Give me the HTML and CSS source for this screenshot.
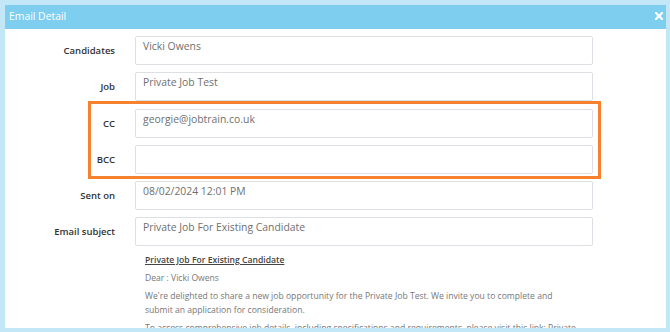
FILE: index.html
```html
<!doctype html>
<html lang = "en">
    <head>
        <meta charset = "utf-8" />
        <meta name = "viewport" content = "width=device-width, initial-scale=1.0">

        <!-- CSS -->
        <link rel="stylesheet" href="styles.css">

        <title>Email Detail</title>
    </head>
    <body>
        <div class = "dialog">
            <div class = "window">
                <header class = "titlebar">
                    <span class = "title">Email Detail</span>
                    <svg class = "close" width = "8" height = "8" viewBox = "0 0 8 8">
                        <path d = "M1 1 L7 7 M7 1 L1 7" stroke = "#fff" stroke-width = "2.2" stroke-linecap = "square" />
                    </svg>
                </header>
                <main class = "content">
                    <div class = "form">
                        <div class = "row">
                            <span class = "label">Candidates</span>
                            <div class = "field">Vicki Owens</div>
                        </div>
                        <div class = "row">
                            <span class = "label">Job</span>
                            <div class = "field">Private Job Test</div>
                        </div>

                        <!-- Highlighted copy fields -->
                        <div class = "highlight">
                            <div class = "row">
                                <span class = "label">CC</span>
                                <div class = "field">georgie@jobtrain.co.uk</div>
                            </div>
                            <div class = "row">
                                <span class = "label">BCC</span>
                                <div class = "field"></div>
                            </div>
                        </div>

                        <div class = "row">
                            <span class = "label">Sent on</span>
                            <div class = "field">08/02/2024 12:01 PM</div>
                        </div>
                        <div class = "row">
                            <span class = "label">Email subject</span>
                            <div class = "field">Private Job For Existing Candidate</div>
                        </div>
                    </div>
                    <div class = "message">
                        <p class = "heading">Private Job For Existing Candidate</p>
                        <p>Dear : Vicki Owens</p>
                        <p>We're delighted to share a new job opportunity for the Private Job Test. We invite you to complete and submit an application for consideration.</p>
                        <p>To access comprehensive job details, including specifications and requirements, please visit this link: Private Job Test.</p>
                    </div>
                </main>
            </div>
        </div>
    </body>
</html>
```

FILE: styles.css
```css
* {
    margin: 0px;
    box-sizing: border-box;
    font-family: "Open Sans", "Liberation Sans", sans-serif;
}
body {
    background-color: #c4e7f8;
}
.dialog {
    width: 670px;
    height: 332px;
    padding: 5px 4px 4px 5px;
    background-color: #c4e7f8;
}
.window {
    height: 100%;
    display: flex;
    overflow: hidden;
    flex-direction: column;
    background-color: #fff;
}
.titlebar {
    height: 24px;
    display: flex;
    flex-shrink: 0;
    align-items: center;
    padding: 0px 3px 3px 4px;
    justify-content: space-between;
    background-color: #7ecef0;
}
.title {
    color: #fff;
    font-size: 10.4px;
}
.close {
    display: block;
}
.content {
    padding-top: 7px;
}
.form {
    display: flex;
    gap: 7px;
    flex-direction: column;
}
.row {
    display: flex;
    align-items: center;
    margin-right: 73px;
}
.label {
    width: 110px;
    color: #333;
    font-size: 9.5px;
    font-weight: 600;
    text-align: right;
    margin-right: 20px;
    flex-shrink: 0;
}
.field {
    flex: 1;
    height: 29px;
    color: #6f6f6f;
    font-size: 10.4px;
    line-height: 14px;
    padding: 2px 7px;
    border: 1px solid #dcdfe3;
    border-radius: 2px;
}
.highlight {
    display: flex;
    gap: 7px;
    flex-direction: column;
    margin: -7px 65px -5px 83px;
    padding: 5px 0px 2px 0px;
    border: 3px solid #f6812f;
}
.highlight .row {
    margin-right: 5px;
}
.highlight .label {
    width: 24px;
}
.message {
    margin: 7px 0px 0px 140px;
    width: 436px;
}
.message p {
    color: #777;
    font-size: 8.6px;
    line-height: 14px;
    margin-bottom: 4px;
}
.message .heading {
    color: #444;
    font-weight: 600;
    text-decoration: underline;
}
```
